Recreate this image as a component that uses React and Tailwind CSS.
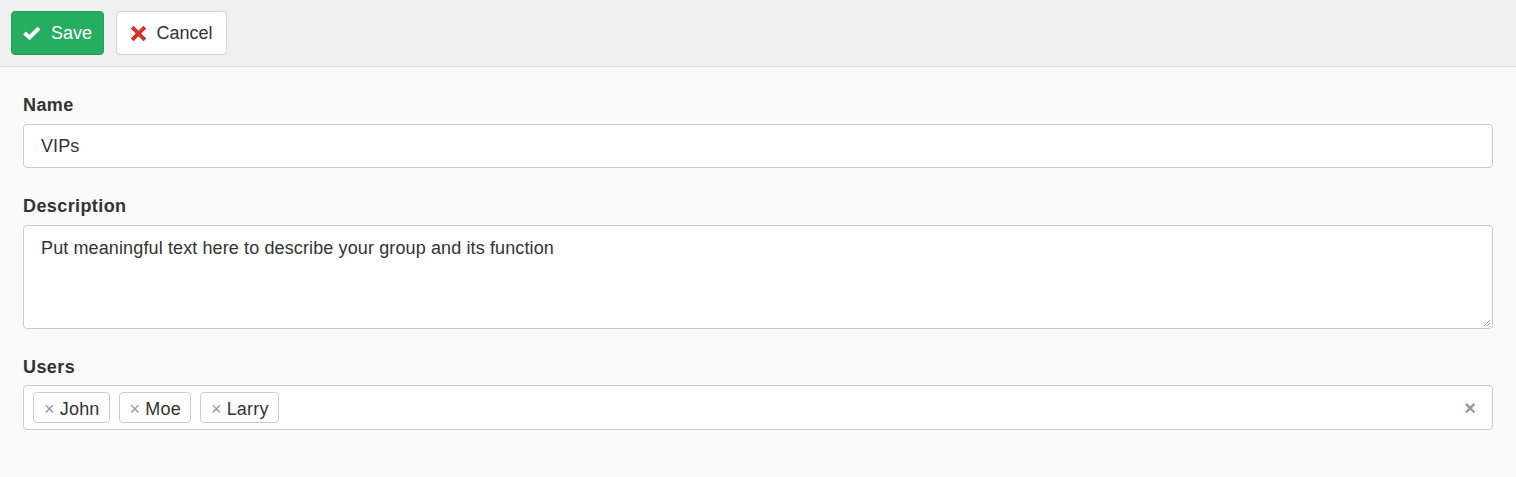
import React from 'react';

const font = { fontFamily: '"Liberation Sans", Arial, sans-serif' };

const CheckIcon = () => (
  <svg width="18" height="14" viewBox="0 0 18 14" className="text-white">
    <path d="M1.5 7 L6.5 11.5 L16 2" fill="none" stroke="currentColor" strokeWidth="4" strokeLinejoin="miter" />
  </svg>
);

const CrossIcon = () => (
  <svg width="17" height="17" viewBox="0 0 16 16">
    <path d="M2 2 L14 14 M14 2 L2 14" fill="none" stroke="#d0352c" strokeWidth="3.8" />
  </svg>
);

const Tag = ({ name }) => (
  <span className="flex items-center h-[31px] pl-[10px] pr-[9px] pt-[3px] gap-[5px] border border-[#cccccc] rounded-[4px] bg-white text-[18px] tracking-[0.2px] text-[#333]">
    <span className="text-[#999] text-[18px] leading-none">×</span>
    {name}
  </span>
);

const App = () => {
  return (
    <div className="w-[1516px] h-[477px] bg-[#fafafa] text-[#333]" style={font}>
      <div className="h-[67px] bg-[#f0f0f0] border-b border-[#dcdcdc] flex items-center gap-3 px-[11px]">
        <button className="h-[44px] w-[93px] rounded-[4px] bg-[#26ad5f] border border-[#22a057] flex items-center justify-center gap-[10px] text-white text-[18px]">
          <CheckIcon />
          Save
        </button>
        <button className="h-[44px] w-[111px] rounded-[4px] bg-white border border-[#d4d4d4] flex items-center justify-center gap-[9px] text-[#333] text-[18px]">
          <CrossIcon />
          Cancel
        </button>
      </div>
      <div className="px-[23px] pt-[28px] flex flex-col">
        <label className="font-bold text-[18px] tracking-[0.4px] h-[20px] leading-[20px] mb-[9px]">Name</label>
        <div className="h-[44px] bg-white border border-[#cccccc] rounded-[4px] flex items-center px-[17px] text-[18px] tracking-[0.1px]">
          VIPs
        </div>
        <label className="font-bold text-[18px] tracking-[0.4px] h-[20px] leading-[20px] mt-[28px] mb-[9px]">Description</label>
        <div className="relative h-[104px] bg-white border border-[#cccccc] rounded-[4px] px-[17px] pt-[9px] text-[18px] tracking-[0.12px]">
          Put meaningful text here to describe your group and its function
          <svg className="absolute right-[1px] bottom-[1px]" width="8" height="8" viewBox="0 0 8 8">
            <path d="M7 1 L1 7 M7 4 L4 7" stroke="#999" strokeWidth="1" />
          </svg>
        </div>
        <label className="font-bold text-[18px] tracking-[0.4px] h-[20px] leading-[20px] mt-[28px] mb-[8px]">Users</label>
        <div className="h-[45px] bg-white border border-[#cccccc] rounded-[4px] flex items-center pl-[9px] pr-[16px] gap-[9px]">
          <Tag name="John" />
          <Tag name="Moe" />
          <Tag name="Larry" />
          <span className="ml-auto text-[#999] text-[20px] font-bold leading-none">×</span>
        </div>
      </div>
    </div>
  );
};

export default App;
